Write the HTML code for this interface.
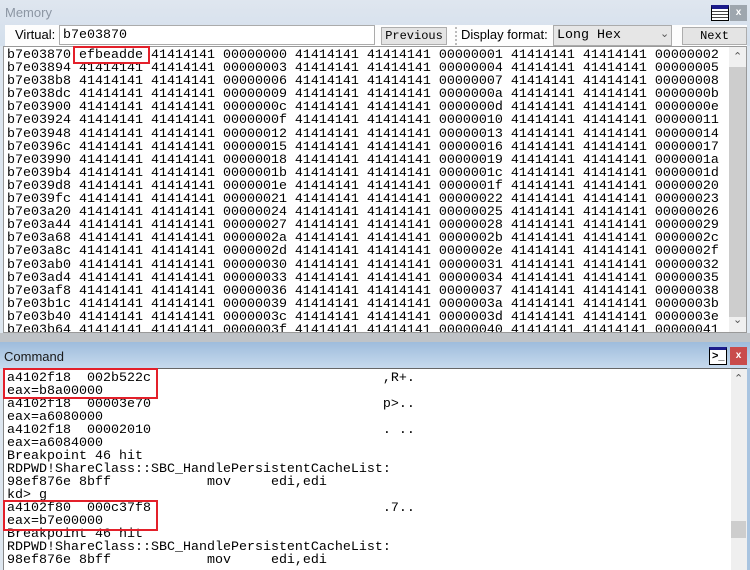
<!DOCTYPE html>
<html><head><style>
*{margin:0;padding:0;box-sizing:border-box}
body{width:750px;height:570px;overflow:hidden;position:relative;background:#dde6ef;font-family:"Liberation Sans",sans-serif}
.abs{position:absolute}
.mono{font-family:"Liberation Mono",monospace;font-size:13.33px;white-space:pre;color:#000}
.red{position:absolute;border:2.5px solid #e3202a}
.btn{position:absolute;background:#e4e4e4;border:1px solid #adadad;font-family:"Liberation Mono",monospace;font-size:12px;text-align:center;line-height:16px}
</style></head><body>
<div class="abs" style="left:0;top:0;width:750px;height:46px;background:linear-gradient(#dfe6ef,#d3dfec)"></div>
<div class="abs" style="left:5px;top:5px;font-size:13px;color:#8c96a3">Memory</div>
<div class="abs" style="left:711px;top:5px;width:18px;height:16px;border:1px solid #000;border-top:4px solid #1c1c8c;background:repeating-linear-gradient(#fff 0 2px,#444 2px 3px)"></div>
<div class="abs" style="left:730px;top:5px;width:17px;height:16px;background:#9ea6ae;color:#fff;font-size:10px;text-align:center;line-height:16px;font-weight:bold">x</div>
<div class="abs" style="left:5px;top:25px;width:742px;height:21px;background:#fdfdfd"></div>
<div class="abs" style="left:15px;top:27px;font-size:13px">Virtual:</div>
<div class="abs mono" style="left:59px;top:25px;width:316px;height:20px;border:1px solid #ababab;background:#fff;padding:2px 3px">b7e03870</div>
<div class="btn" style="left:381px;top:27px;width:66px;height:18px">Previous</div>
<div class="abs" style="left:455px;top:27px;height:18px;border-left:2px dotted #bbb"></div>
<div class="abs" style="left:461px;top:27px;font-size:13px">Display format:</div>
<div class="abs mono" style="left:553px;top:25px;width:119px;height:21px;border:1px solid #ababab;background:#e6e6e6;padding:2px 3px">Long Hex</div>
<div class="abs" style="left:660px;top:27px;font-size:11px;color:#555">&#8964;</div>
<div class="btn" style="left:682px;top:27px;width:65px;height:18px">Next</div>
<div class="abs" style="left:3px;top:46px;width:744px;height:287px;background:#fff;border:1px solid #999;overflow:hidden">
<div class="mono" style="position:absolute;left:3px;top:2px;line-height:13.1px">b7e03870 efbeadde 41414141 00000000 41414141 41414141 00000001 41414141 41414141 00000002
b7e03894 41414141 41414141 00000003 41414141 41414141 00000004 41414141 41414141 00000005
b7e038b8 41414141 41414141 00000006 41414141 41414141 00000007 41414141 41414141 00000008
b7e038dc 41414141 41414141 00000009 41414141 41414141 0000000a 41414141 41414141 0000000b
b7e03900 41414141 41414141 0000000c 41414141 41414141 0000000d 41414141 41414141 0000000e
b7e03924 41414141 41414141 0000000f 41414141 41414141 00000010 41414141 41414141 00000011
b7e03948 41414141 41414141 00000012 41414141 41414141 00000013 41414141 41414141 00000014
b7e0396c 41414141 41414141 00000015 41414141 41414141 00000016 41414141 41414141 00000017
b7e03990 41414141 41414141 00000018 41414141 41414141 00000019 41414141 41414141 0000001a
b7e039b4 41414141 41414141 0000001b 41414141 41414141 0000001c 41414141 41414141 0000001d
b7e039d8 41414141 41414141 0000001e 41414141 41414141 0000001f 41414141 41414141 00000020
b7e039fc 41414141 41414141 00000021 41414141 41414141 00000022 41414141 41414141 00000023
b7e03a20 41414141 41414141 00000024 41414141 41414141 00000025 41414141 41414141 00000026
b7e03a44 41414141 41414141 00000027 41414141 41414141 00000028 41414141 41414141 00000029
b7e03a68 41414141 41414141 0000002a 41414141 41414141 0000002b 41414141 41414141 0000002c
b7e03a8c 41414141 41414141 0000002d 41414141 41414141 0000002e 41414141 41414141 0000002f
b7e03ab0 41414141 41414141 00000030 41414141 41414141 00000031 41414141 41414141 00000032
b7e03ad4 41414141 41414141 00000033 41414141 41414141 00000034 41414141 41414141 00000035
b7e03af8 41414141 41414141 00000036 41414141 41414141 00000037 41414141 41414141 00000038
b7e03b1c 41414141 41414141 00000039 41414141 41414141 0000003a 41414141 41414141 0000003b
b7e03b40 41414141 41414141 0000003c 41414141 41414141 0000003d 41414141 41414141 0000003e
b7e03b64 41414141 41414141 0000003f 41414141 41414141 00000040 41414141 41414141 00000041</div>
<div class="abs" style="left:725px;top:0;width:18px;height:286px;background:#f0f0f0"></div>
<div class="abs" style="left:725px;top:20px;width:18px;height:250px;background:#cdcdcd"></div>
<div class="abs" style="left:729px;top:3px;font-size:11px;color:#555">&#8963;</div>
<div class="abs" style="left:729px;top:266px;font-size:11px;color:#555">&#8964;</div>
</div>
<div class="red" style="left:73px;top:46px;width:77px;height:18px"></div>
<div class="abs" style="left:0;top:333px;width:750px;height:9px;background:#bfc3c7"></div>
<div class="abs" style="left:0;top:342px;width:750px;height:27px;background:linear-gradient(#9ebcdc,#c8dbee)"></div>
<div class="abs" style="left:4px;top:349px;font-size:13px;color:#1a1a1a">Command</div>
<div class="abs" style="left:709px;top:347px;width:18px;height:18px;border:1px solid #000;border-top:3px solid #1c1c8c;background:#fff;font-size:11px;font-weight:bold;line-height:13px;padding-left:2px">&gt;_</div>
<div class="abs" style="left:730px;top:347px;width:17px;height:18px;background:#c94b4b;color:#fff;font-size:10px;text-align:center;line-height:18px;font-weight:bold">x</div>
<div class="abs" style="left:3px;top:368px;width:747px;height:202px;background:#fff;border-left:1px solid #888;border-top:1px solid #666;overflow:hidden">
<div class="mono" style="position:absolute;left:3px;top:3px;line-height:13px">a4102f18  002b522c                             ,R+.
eax=b8a00000
a4102f18  00003e70                             p>..
eax=a6080000
a4102f18  00002010                             . ..
eax=a6084000
Breakpoint 46 hit
RDPWD!ShareClass::SBC_HandlePersistentCacheList:
98ef876e 8bff            mov     edi,edi
kd> g
a4102f80  000c37f8                             .7..
eax=b7e00000
Breakpoint 46 hit
RDPWD!ShareClass::SBC_HandlePersistentCacheList:
98ef876e 8bff            mov     edi,edi</div>
<div class="abs" style="left:727px;top:0;width:17px;height:202px;background:#efefef"></div>
<div class="abs" style="left:727px;top:152px;width:15px;height:17px;background:#cdcdcd"></div>
<div class="abs" style="left:730px;top:3px;font-size:11px;color:#555">&#8963;</div>
</div>
<div class="abs" style="left:747px;top:368px;width:3px;height:202px;background:#a9c4e0"></div>
<div class="red" style="left:3px;top:368px;width:155px;height:31px"></div>
<div class="red" style="left:3px;top:500px;width:155px;height:31px"></div>
</body></html>
